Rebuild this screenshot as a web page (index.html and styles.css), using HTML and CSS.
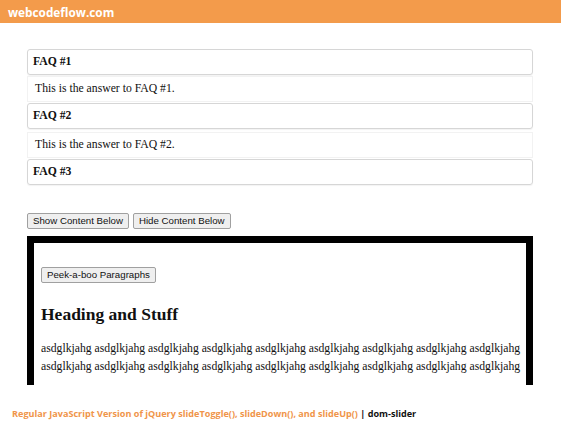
FILE: index.html
```html
<!DOCTYPE html>
<html lang="en">
<head>
    <meta charset="UTF-8">
    <meta name="viewport" content="width=device-width, initial-scale=1.0">
    <title>dom-slider demo</title>
    <link rel="stylesheet" href="styles.css">
</head>
<body>

<header class="topbar">
    <span class="brand">webcodeflow.com</span>
</header>

<div class="demo">
    <!-- FAQ list -->
    <div class="faq">
        <div class="faq-question">FAQ #1</div>
        <div class="faq-answer">This is the answer to FAQ #1.</div>
        <div class="faq-question">FAQ #2</div>
        <div class="faq-answer">This is the answer to FAQ #2.</div>
        <div class="faq-question">FAQ #3</div>
    </div>

    <div class="controls">
        <button class="button">Show Content Below</button>
        <button class="button">Hide Content Below</button>
    </div>

    <!-- content box -->
    <div class="content-box">
        <button class="button peek">Peek-a-boo Paragraphs</button>
        <h2 class="heading">Heading and Stuff</h2>
        <p class="text">asdglkjahg asdglkjahg asdglkjahg asdglkjahg asdglkjahg asdglkjahg asdglkjahg asdglkjahg asdglkjahg asdglkjahg asdglkjahg asdglkjahg asdglkjahg asdglkjahg asdglkjahg asdglkjahg asdglkjahg asdglkjahg</p>
    </div>
</div>

<footer class="credits">
    <span class="credits-title">Regular JavaScript Version of jQuery slideToggle(), slideDown(), and slideUp()</span> | dom-slider
</footer>

</body>
</html>
```

FILE: styles.css
```css
body {
    margin: 0;
    padding: 0;
    background-color: #fff;
    font-family: 'Liberation Serif', serif;
    color: #111;
}

.topbar {
    background-color: #f39b4b;
    height: 23px;
    display: flex;
    align-items: center;
    padding: 0 8px;
}

.brand {
    color: #fff;
    font-family: 'Open Sans', sans-serif;
    font-weight: bold;
    font-size: 11.8px;
}

.demo {
    height: 362px;
    overflow: hidden;
    padding: 26px 28px 0 27px;
    box-sizing: border-box;
}

.faq-question {
    border: 1px solid #d6d6d6;
    border-radius: 3px;
    padding: 5px 5px;
    font-weight: bold;
    font-size: 11.7px;
    line-height: 14px;
    box-shadow: 0 1px 1px rgba(0, 0, 0, 0.05);
}

.faq-answer {
    border: 1px solid #f2f2f2;
    padding: 5px 7px;
    margin: 1px 0;
    font-size: 11.7px;
    line-height: 14px;
}

.faq-answer + .faq-question {
    margin-bottom: 3px;
}

.controls {
    margin-top: 28px;
    display: flex;
    gap: 4px;
}

.button {
    font-family: 'Liberation Sans', sans-serif;
    font-size: 9.7px;
    color: #111;
    background-color: #efefef;
    border: 1px solid #a0a0a0;
    border-radius: 2px;
    padding: 1px 5px;
    line-height: 12px;
}

.content-box {
    margin-top: 7px;
    border: 7px solid #000;
    padding: 21px 4px 60px 7px;
}

.heading {
    font-size: 17.5px;
    margin: 20px 0 0 0;
    line-height: 22px;
}

.text {
    font-size: 11.7px;
    line-height: 18px;
    margin: 15px 0 0 0;
}

.credits {
    padding: 22px 12px 0 12px;
    font-family: 'Open Sans', sans-serif;
    font-weight: bold;
    font-size: 9.1px;
    color: #111;
}

.credits-title {
    color: #f0954a;
}
```
